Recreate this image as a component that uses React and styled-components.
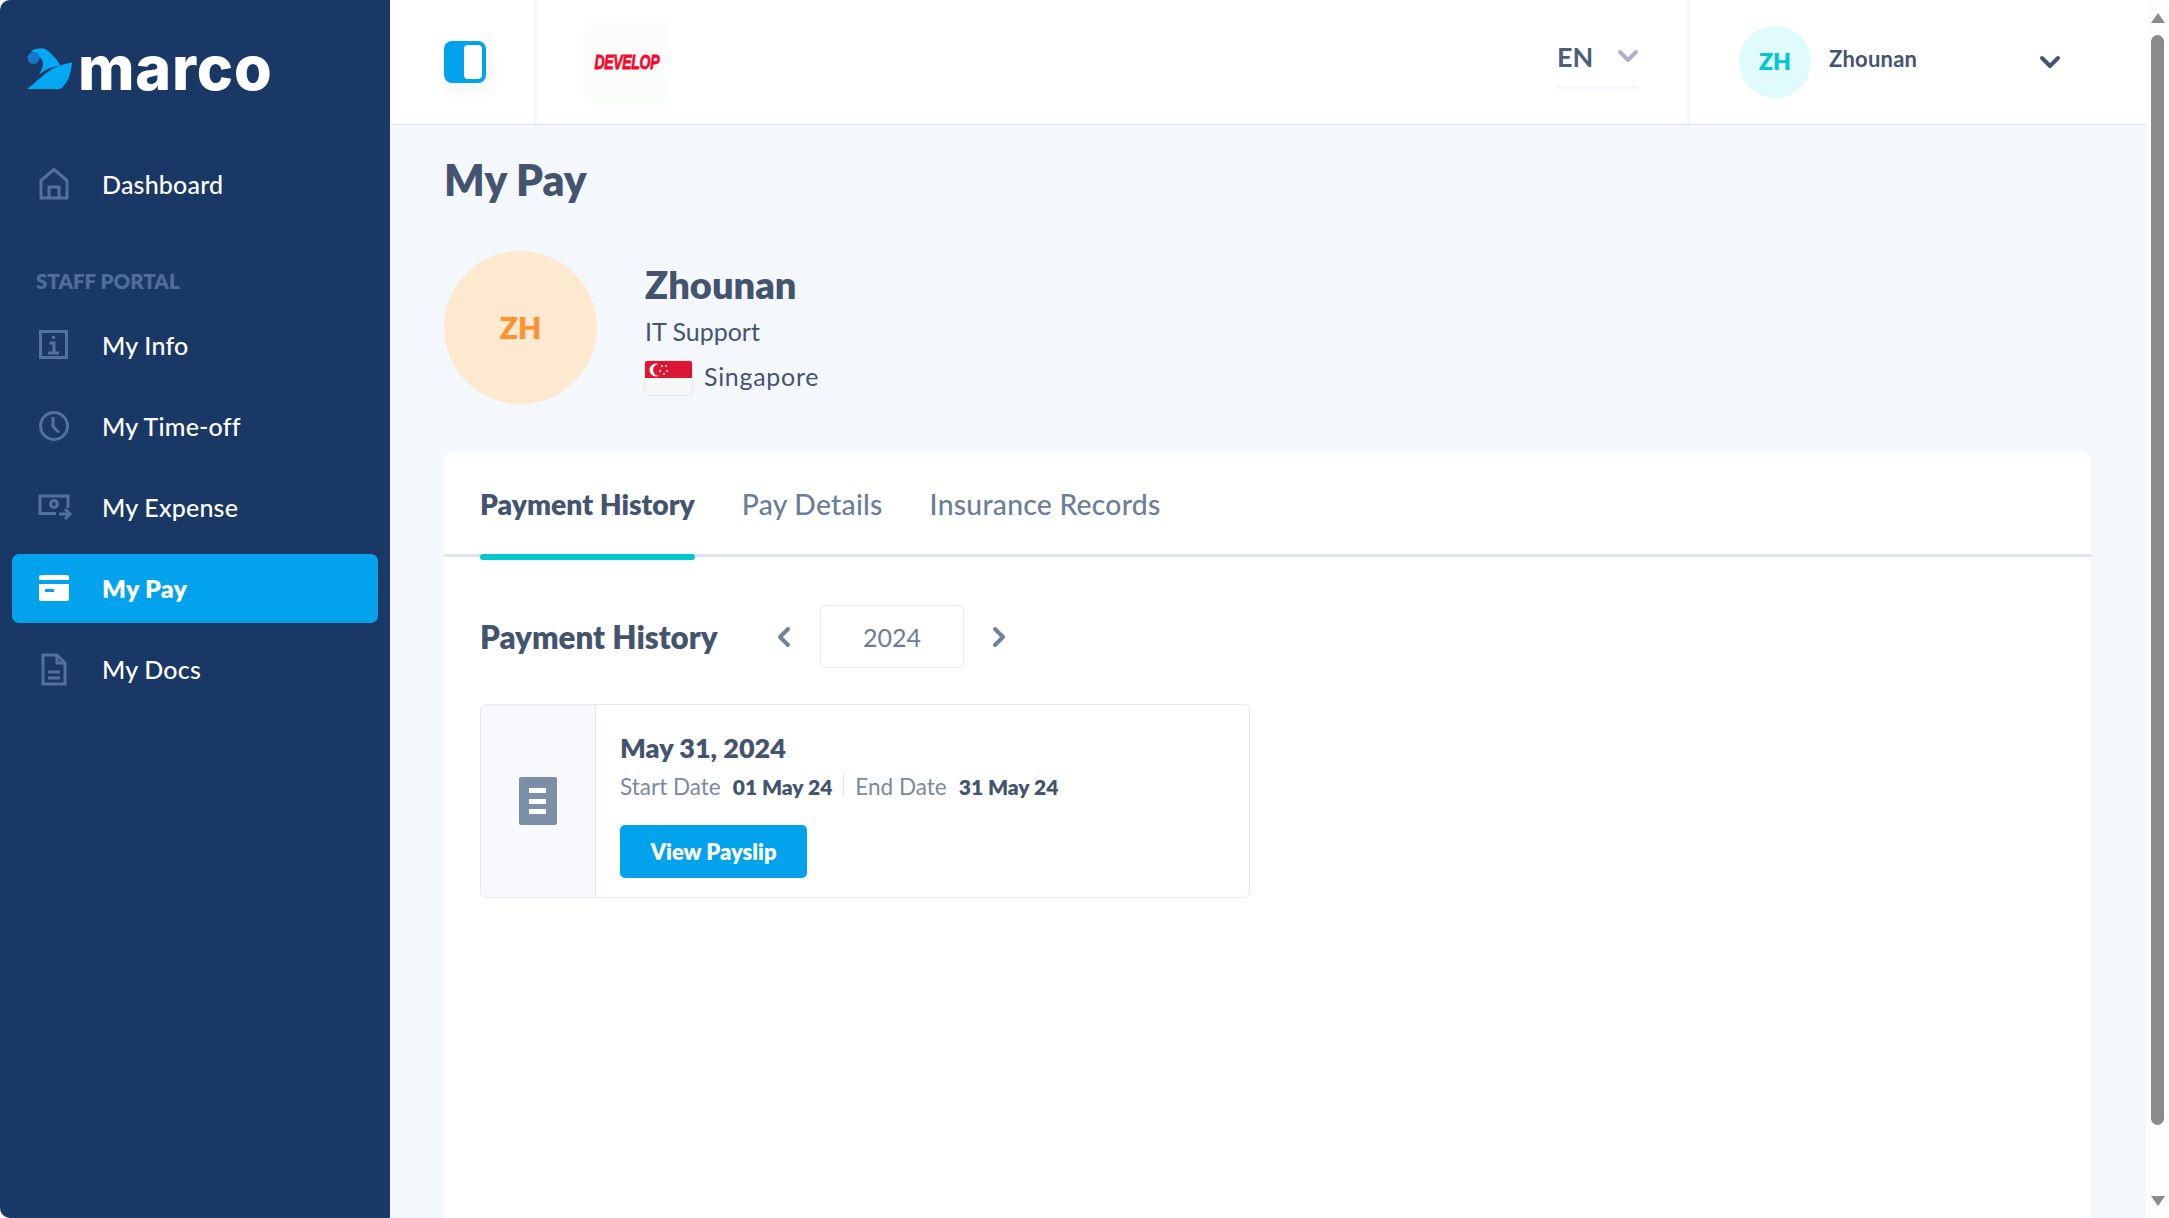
import styled, { createGlobalStyle } from "styled-components";

const GlobalStyle = createGlobalStyle`
  * { box-sizing: border-box; }
  html, body { margin: 0; padding: 0; background: #fff; }
  body { font-family: Lato, "Noto Sans", sans-serif; color: #44546f; overflow: hidden; }
`;

const Page = styled.div`
  width: 100vw;
  height: 100vh;
  display: flex;
  overflow: hidden;
  border-radius: 10px;
  background: #f4f7fc;
`;

const Sidebar = styled.aside`
  width: 390px;
  flex: none;
  background: #1a3866;
  padding: 0 12px;
  display: flex;
  flex-direction: column;
`;

const Logo = styled.div`
  height: 150px;
  padding: 31px 0 0 15px;
  display: flex;
  align-items: flex-start;
  gap: 5px;
`;

const Wordmark = styled.span`
  font-family: Inter, sans-serif;
  font-size: 61px;
  line-height: 74px;
  font-weight: 800;
  letter-spacing: 0.8px;
  color: #fff;
`;

const NavItem = styled.a`
  height: 69px;
  flex: none;
  display: flex;
  align-items: center;
  padding: 0 0 1px 23px;
  border-radius: 7px;
  font-size: 25px;
  letter-spacing: 0.2px;
  font-weight: ${(p) => (p.$active ? 800 : 500)};
  color: #fff;
  background: ${(p) => (p.$active ? "#02a3ec" : "transparent")};
`;

const NavIcon = styled.span`
  width: 67px;
  flex: none;
  display: flex;
  color: ${(p) => (p.$active ? "#fff" : "#54719b")};
`;

const SectionLabel = styled.div`
  height: 92px;
  padding: 50px 0 0 24px;
  font-size: 20.5px;
  line-height: 24px;
  font-weight: 800;
  color: #4f6d98;
`;

const NavList = styled.nav`
  display: flex;
  flex-direction: column;
  gap: 12px;
`;

const Main = styled.div`
  flex: 1;
  min-width: 0;
  display: flex;
  flex-direction: column;
`;

const Header = styled.header`
  height: 125px;
  flex: none;
  display: flex;
  align-items: center;
  background: #fff;
  border-bottom: 1px solid #e1e5ec;
`;

const ToggleCell = styled.div`
  width: 147px;
  height: 100%;
  flex: none;
  display: flex;
  align-items: center;
  padding-left: 54px;
  border-right: 3px solid #f4f7fc;
`;

const ToggleButton = styled.span`
  width: 42px;
  height: 42px;
  border-radius: 8px;
  background: #02a3ec;
  box-shadow: 3px 8px 14px rgba(60, 80, 110, 0.07);
  display: flex;
  justify-content: flex-end;
  padding: 4px;
  &::after {
    content: "";
    width: 18px;
    height: 100%;
    background: #fff;
    border-radius: 4px;
  }
`;

const CompanyLogo = styled.div`
  width: 84px;
  height: 84px;
  margin-left: 48px;
  background: #fbfdfb;
  display: flex;
  align-items: center;
  justify-content: center;
`;

const CompanyName = styled.span`
  display: inline-block;
  font-family: "Liberation Sans", sans-serif;
  font-size: 19.5px;
  font-weight: 700;
  font-style: italic;
  letter-spacing: -0.5px;
  color: #f5082e;
  -webkit-text-stroke: 0.8px #f5082e;
  transform: scaleX(0.72);
`;

const LangPicker = styled.div`
  margin-left: auto;
  width: 82px;
  height: 66px;
  display: flex;
  align-items: center;
  justify-content: space-between;
  align-self: flex-start;
  margin-top: 23px;
  padding-top: 3px;
  border-bottom: 3px solid #f4f7fc;
  font-size: 27px;
  font-weight: 700;
  color: #4f5f7a;
`;

const LangChevron = styled.span`
  display: flex;
  color: #a9b5c6;
`;

const UserCell = styled.div`
  width: 459px;
  height: 100%;
  margin-left: 48px;
  flex: none;
  display: flex;
  align-items: center;
  padding: 0 85px 0 49px;
  border-left: 3px solid #f4f7fc;
`;

const Avatar = styled.div`
  width: ${(p) => p.$size}px;
  height: ${(p) => p.$size}px;
  flex: none;
  border-radius: 50%;
  display: flex;
  align-items: center;
  justify-content: center;
  background: ${(p) => p.$bg};
  color: ${(p) => p.$fg};
  font-size: ${(p) => p.$font}px;
  font-weight: 800;
  padding-bottom: 2px;
`;

const UserName = styled.span`
  margin: -8px auto 0 18px;
  font-size: 22px;
  font-weight: 700;
  letter-spacing: 0.2px;
  color: #44546f;
`;

const Content = styled.main`
  flex: 1;
  min-height: 0;
  display: flex;
  flex-direction: column;
  padding: 0 55px 0 54px;
`;

const PageTitle = styled.h1`
  margin: 27px 0 0;
  height: 56px;
  font-size: 42.5px;
  line-height: 56px;
  font-weight: 800;
  color: #44546f;
`;

const Profile = styled.section`
  margin-top: 43px;
  display: flex;
  align-items: center;
  gap: 48px;
`;

const ProfileText = styled.div`
  display: flex;
  flex-direction: column;
  margin-top: 3px;
`;

const ProfileName = styled.div`
  font-size: 38px;
  line-height: 48px;
  font-weight: 800;
  color: #44546f;
`;

const ProfileLine = styled.div`
  display: flex;
  align-items: center;
  gap: 12px;
  height: ${(p) => p.$h}px;
  font-size: 25px;
  letter-spacing: ${(p) => p.$tracking || 0}px;
  color: #44546f;
`;

const Flag = styled.svg`
  width: 47px;
  height: 34px;
  margin-top: 3px;
  border-radius: 2px;
  box-shadow: 0 0 0 1px #e6e9ee;
`;

const Card = styled.section`
  flex: 1;
  margin-top: 48px;
  background: #fff;
  border-radius: 8px 8px 0 0;
`;

const Tabs = styled.div`
  height: 105px;
  display: flex;
  gap: 47px;
  padding-left: 36px;
  border-bottom: 3px solid #dfe3ec;
`;

const Tab = styled.div`
  position: relative;
  height: 105px;
  padding-top: 32px;
  font-size: 28.3px;
  line-height: 40px;
  letter-spacing: ${(p) => (p.$active ? 0 : 0.25)}px;
  font-weight: ${(p) => (p.$active ? 800 : 500)};
  color: ${(p) => (p.$active ? "#44546f" : "#6c7d96")};
  ${(p) =>
    p.$active &&
    `&::after {
      content: "";
      position: absolute;
      left: 0;
      right: 0;
      bottom: -3px;
      height: 6px;
      border-radius: 3px;
      background: #02c7d1;
    }`}
`;

const Body = styled.div`
  padding: 48px 36px 0;
`;

const YearRow = styled.div`
  display: flex;
  align-items: center;
  height: 63px;
`;

const SectionTitle = styled.h2`
  margin: 0;
  width: 288px;
  font-size: 31.3px;
  font-weight: 800;
  color: #44546f;
`;

const Arrow = styled.span`
  display: flex;
  width: 34px;
  justify-content: center;
  color: #71829b;
`;

const YearBox = styled.div`
  width: 144px;
  height: 63px;
  margin: 0 17px 0 18px;
  display: flex;
  align-items: center;
  justify-content: center;
  border: 1px solid #e8ebf1;
  border-radius: 6px;
  font-size: 25px;
  color: #6c7d96;
`;

const SlipCard = styled.article`
  width: 770px;
  height: 194px;
  margin-top: 36px;
  display: flex;
  border: 1px solid #e4e8ef;
  border-radius: 6px;
  overflow: hidden;
`;

const SlipIconPane = styled.div`
  width: 115px;
  flex: none;
  display: flex;
  align-items: center;
  justify-content: center;
  background: #f8f9fc;
  border-right: 1px solid #e4e8ef;
  padding-right: 1px;
`;

const SlipInfo = styled.div`
  padding: 24px 0 0 24px;
`;

const SlipDate = styled.div`
  font-size: 27px;
  line-height: 38px;
  font-weight: 800;
  color: #44546f;
`;

const SlipMeta = styled.div`
  display: flex;
  align-items: center;
  height: 24px;
  margin-top: 7px;
  font-size: 22.5px;
  color: #7a8aa1;
`;

const MetaValue = styled.strong`
  margin-left: 12px;
  font-size: 21px;
  font-weight: 800;
  color: #44546f;
`;

const MetaDivider = styled.span`
  width: 1px;
  height: 24px;
  margin: 0 11px;
  background: #dfe3ea;
`;

const PrimaryButton = styled.button`
  width: 187px;
  height: 53px;
  margin-top: 27px;
  border: 0;
  border-radius: 5px;
  background: #02a3ec;
  color: #fff;
  font-family: inherit;
  font-size: 22px;
  font-weight: 800;
`;

const ScrollRail = styled.div`
  width: 23px;
  flex: none;
  display: flex;
  flex-direction: column;
  align-items: center;
  background: #fdfdfd;
  padding: 13px 0 12px 0;
  color: #8b8b8b;
`;

const ScrollThumb = styled.div`
  width: 13px;
  height: 1090px;
  margin: 12px 0 auto;
  border-radius: 7px;
  background: #8b8b8b;
`;

const iconProps = {
  width: 38,
  height: 38,
  viewBox: "0 0 38 38",
  fill: "none",
  stroke: "currentColor",
  strokeWidth: 3,
};

const HomeIcon = () => (
  <svg {...iconProps}>
    <path d="M6 33V15.5L19 4.5l13 11V33z" strokeLinejoin="round" />
    <path d="M14 33V22h10v11" />
  </svg>
);
const InfoIcon = () => (
  <svg {...iconProps}>
    <rect x="5.5" y="5.5" width="26" height="26" />
    <path d="M18.5 10v3M14.5 17h4.5v10M13 27h11" />
  </svg>
);
const ClockIcon = () => (
  <svg {...iconProps}>
    <circle cx="19" cy="19" r="13.5" />
    <path d="M18 10v9.5l6 6" />
  </svg>
);
const ExpenseIcon = () => (
  <svg {...iconProps}>
    <path d="M21 25.500H5V8h28v12" />
    <circle cx="19" cy="16" r="3.400" />
    <path d="M24 26h10" />
    <path d="M30 21l5 5-5 5" />
  </svg>
);
const PayIcon = () => (
  <svg {...iconProps} stroke="none" fill="currentColor">
    <path d="M4 8a2 2 0 0 1 2-2h26a2 2 0 0 1 2 2v3H4zM4 15h30v15a2 2 0 0 1-2 2H6a2 2 0 0 1-2-2zm6 5v3h9v-3z" fillRule="evenodd" />
  </svg>
);
const DocIcon = () => (
  <svg {...iconProps}>
    <path d="M8 5h14l8 8v21H8z" />
    <path d="M22 5v8h8M13 22h12M13 28h12" />
  </svg>
);

const Chevron = ({ size = 22, dir = "down", width = 4 }) => {
  const d = { down: "M3 7l8 8 8-8", left: "M14 3l-8 8 8 8", right: "M8 3l8 8-8 8" }[dir];
  return (
    <svg width={size} height={size} viewBox="0 0 22 22" fill="none" stroke="currentColor" strokeWidth={width} strokeLinejoin="round" strokeLinecap="round">
      <path d={d} />
    </svg>
  );
};

const navTop = [{ label: "Dashboard", Icon: HomeIcon }];
const navPortal = [
  { label: "My Info", Icon: InfoIcon },
  { label: "My Time-off", Icon: ClockIcon },
  { label: "My Expense", Icon: ExpenseIcon },
  { label: "My Pay", Icon: PayIcon, active: true },
  { label: "My Docs", Icon: DocIcon },
];

const NavLink = ({ label, Icon, active }) => (
  <NavItem $active={active}>
    <NavIcon $active={active}>
      <Icon />
    </NavIcon>
    {label}
  </NavItem>
);

export default function App() {
  return (
    <>
      <GlobalStyle />
      <Page>
        <Sidebar>
          <Logo>
            <svg width="46" height="42" viewBox="0 0 46 42" style={{ marginTop: 17 }}>
              <path d="M4 3C10 0 17-1 21 3c5 4 10 9 12 14.500-8 1-15 4-21 9 4-6 5-11 3-15-2-3-7-5-11-8.500z" fill="#04a9f4" />
              <circle cx="6.500" cy="10" r="6" fill="#1677c9" />
              <path d="M45 14.500c-1 10-3 18-9 24-1 2-3 2.500-6 2.500H0c8-6 16-14 25-20 6-3 13-5.500 20-6.500z" fill="#04a9f4" />
            </svg>
            <Wordmark>marco</Wordmark>
          </Logo>
          {navTop.map((n) => (
            <NavLink key={n.label} {...n} />
          ))}
          <SectionLabel>STAFF PORTAL</SectionLabel>
          <NavList>
            {navPortal.map((n) => (
              <NavLink key={n.label} {...n} />
            ))}
          </NavList>
        </Sidebar>
        <Main>
          <Header>
            <ToggleCell>
              <ToggleButton />
            </ToggleCell>
            <CompanyLogo>
              <CompanyName>DEVELOP</CompanyName>
            </CompanyLogo>
            <LangPicker>
              EN
              <LangChevron>
                <Chevron />
              </LangChevron>
            </LangPicker>
            <UserCell>
              <Avatar $size={72} $bg="#e0fbfc" $fg="#02c7d1" $font={23}>
                ZH
              </Avatar>
              <UserName>Zhounan</UserName>
              <Chevron />
            </UserCell>
          </Header>
          <Content>
            <PageTitle>My Pay</PageTitle>
            <Profile>
              <Avatar $size={153} $bg="#fde8d0" $fg="#ff9233" $font={30}>
                ZH
              </Avatar>
              <ProfileText>
                <ProfileName>Zhounan</ProfileName>
                <ProfileLine $h={46}>IT Support</ProfileLine>
                <ProfileLine $h={44} $tracking={0.7}>
                  <Flag viewBox="0 0 47 34">
                    <rect width="47" height="34" fill="#f7f7f7" />
                    <rect width="47" height="17" fill="#dc1733" />
                    <circle cx="11" cy="9" r="6.500" fill="#fff" />
                    <circle cx="14" cy="9" r="6" fill="#dc1733" />
                    <circle cx="17" cy="5" r="1" fill="#fff" />
                    <circle cx="21" cy="5" r="1" fill="#fff" />
                    <circle cx="15" cy="10" r="1" fill="#fff" />
                    <circle cx="22" cy="10" r="1" fill="#fff" />
                    <circle cx="19" cy="13" r="1" fill="#fff" />
                  </Flag>
                  Singapore
                </ProfileLine>
              </ProfileText>
            </Profile>
            <Card>
              <Tabs>
                <Tab $active>Payment History</Tab>
                <Tab>Pay Details</Tab>
                <Tab>Insurance Records</Tab>
              </Tabs>
              <Body>
                <YearRow>
                  <SectionTitle>Payment History</SectionTitle>
                  <Arrow>
                    <Chevron dir="left" />
                  </Arrow>
                  <YearBox>2024</YearBox>
                  <Arrow>
                    <Chevron dir="right" />
                  </Arrow>
                </YearRow>
                <SlipCard>
                  <SlipIconPane>
                    <svg width="38" height="48" viewBox="0 0 38 48">
                      <rect width="38" height="48" rx="2" fill="#7d8ea8" />
                      <rect x="10" y="11" width="17" height="5" fill="#fff" />
                      <rect x="10" y="22" width="17" height="5" fill="#fff" />
                      <rect x="10" y="32" width="17" height="5" fill="#fff" />
                    </svg>
                  </SlipIconPane>
                  <SlipInfo>
                    <SlipDate>May 31, 2024</SlipDate>
                    <SlipMeta>
                      Start Date<MetaValue>01 May 24</MetaValue>
                      <MetaDivider />
                      End Date<MetaValue>31 May 24</MetaValue>
                    </SlipMeta>
                    <PrimaryButton>View Payslip</PrimaryButton>
                  </SlipInfo>
                </SlipCard>
              </Body>
            </Card>
          </Content>
        </Main>
        <ScrollRail>
          <svg width="14" height="10" viewBox="0 0 14 10" fill="currentColor">
            <path d="M7 0l7 10H0z" />
          </svg>
          <ScrollThumb />
          <svg width="14" height="10" viewBox="0 0 14 10" fill="currentColor">
            <path d="M0 0h14L7 10z" />
          </svg>
        </ScrollRail>
      </Page>
    </>
  );
}
